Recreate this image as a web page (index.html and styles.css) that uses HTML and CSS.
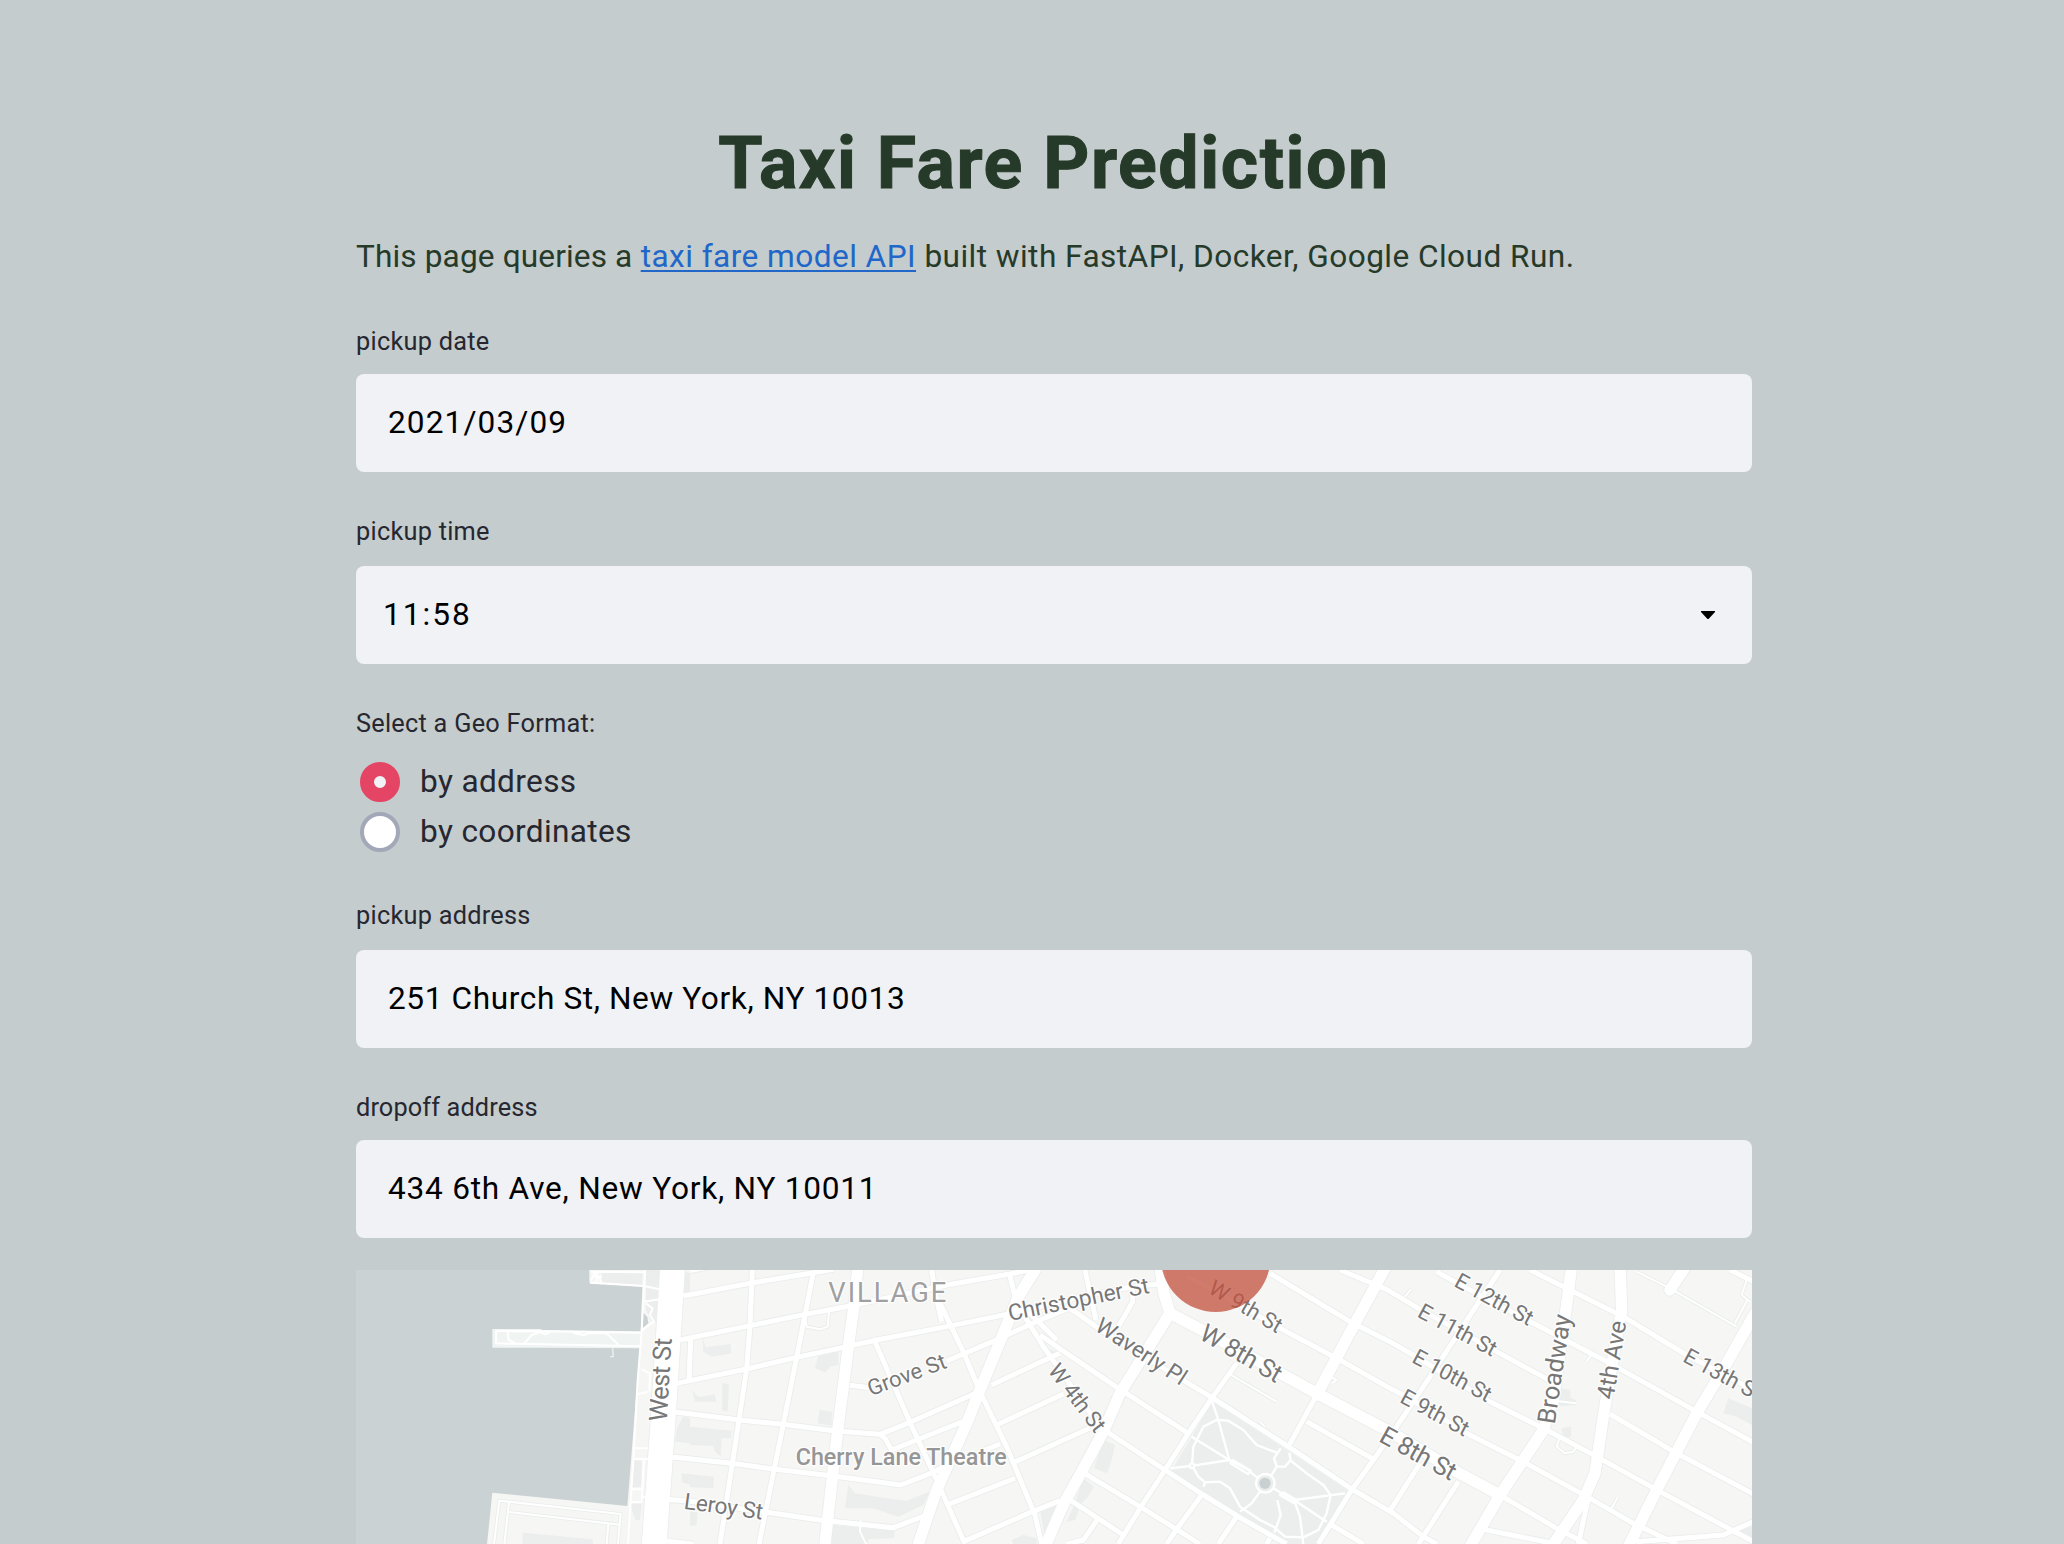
FILE: index.html
```html
<!DOCTYPE html>
<html lang="en">
<head>
<meta charset="utf-8">
<title>Taxi Fare Prediction</title>
<link rel="stylesheet" href="styles.css">
</head>
<body>
<main class="page">
  <h1 class="title">Taxi Fare Prediction</h1>
  <p class="intro"><span class="intro-lead">This page queries a</span> <a class="link" href="#">taxi fare model API</a> built with FastAPI, Docker, Google Cloud Run.</p>

  <div class="field field-date">
    <label class="label" for="date">pickup date</label>
    <input class="input input-date" id="date" type="text" value="2021/03/09">
  </div>

  <div class="field field-time">
    <span class="label">pickup time</span>
    <div class="select">
      <span class="select-value">11:58</span>
      <svg class="caret" viewBox="0 0 14 8"><path d="M0 0H14V1L8 7.4Q7 8.400 6 7.400L0 1Z"/></svg>
    </div>
  </div>

  <div class="field field-geo">
    <span class="label">Select a Geo Format:</span>
    <div class="radios">
      <div class="radio"><span class="dot dot-on"></span><span class="radio-text">by address</span></div>
      <div class="radio"><span class="dot"></span><span class="radio-text">by coordinates</span></div>
    </div>
  </div>

  <div class="field field-pickup">
    <label class="label" for="pickup">pickup address</label>
    <input class="input input-pickup" id="pickup" type="text" value="251 Church St, New York, NY 10013">
  </div>

  <div class="field field-dropoff">
    <label class="label label-dropoff" for="dropoff">dropoff address</label>
    <input class="input input-dropoff" id="dropoff" type="text" value="434 6th Ave, New York, NY 10011">
  </div>

  <svg class="map" viewBox="48 30 4188 822">
    <defs>
      <g id="minor">
        <path d="M1030 108L1240 68 1420 38 1480 28M1050 32L1100 22"/>
        <path d="M1020 240L1230 197 1395 163 1530 138 1820 75 2010 42 2080 28"/>
        <path d="M1010 370L1220 327 1370 292 1510 262 1610 240 1820 200 2000 163 2180 120 2350 85 2480 68"/>
        <path d="M1000 455L1200 480 1330 493 1480 512 1620 523 1710 487 1910 398"/>
        <path d="M1620 523L1635 535 1655 570 1730 540 1880 480"/>
        <path d="M990 590L1175 610 1300 627 1480 648 1682 675 1780 637 1850 600M1930 572L1980 552"/>
        <path d="M980 718L1050 724 1280 757 1440 780 1660 803 1760 765M1820 735L2025 655"/>
        <path d="M2015 610L2100 572 2270 495M1970 495L2170 402M1955 375L2110 302 2160 280"/>
        <path d="M1820 303L1980 235 2100 180 2200 140M1530 376L1590 383M980 843L1060 853"/>
        <path d="M1870 845L2070 758 2160 722"/>
        <path d="M1237 30L1230 195 1220 327 1197 480 1140 852"/>
        <path d="M1420 38L1395 165 1370 292 1330 493 1257 852"/>
        <path d="M1052 235L1047 362"/>
        <path d="M1605 245L1710 487 1790 660 1875 852"/>
        <path d="M1775 30L1785 95 1805 185M1800 130L1870 275 1920 395 2000 560 2085 765 2105 852"/>
        <path d="M2007 38L2030 130M2030 130L2110 260 2280 500M2060 150L2150 240"/>
        <path d="M2300 515L2475 630 2590 705 2695 770 2800 830 2840 852"/>
        <path d="M2100 225L2180 280 2340 388 2545 520"/>
        <path d="M2190 145L2290 215 2545 370 2620 415 2845 560 3040 690 3160 760 3250 830 3290 852"/>
        <path d="M2225 635L2400 740 2510 808 2580 852M2190 720L2350 825"/>
        <path d="M2690 310L2615 415 2545 520 2475 630 2400 745 2335 852"/>
        <path d="M2585 705L2510 808 2480 852M2690 770L2635 852M2790 835L2780 852"/>
        <path d="M2930 405L2845 560"/>
        <path d="M3480 30L3420 120 3270 350 3170 500 3100 600 3035 690 2935 852"/>
        <path d="M2900 485L3105 600"/>
        <path d="M2540 50L2610 85 2830 210 3000 300 3150 385 3190 405 3390 525 3555 608 3750 715 3880 790 4010 852"/>
        <path d="M2790 40L3030 185 3150 245 3220 285 3450 425 3620 510 3770 590 3960 695 4240 845"/>
        <path d="M3000 30L3140 88 3235 145 3470 275 3630 362M3810 462L4010 580 4240 702"/>
        <path d="M3290 35L3380 85 3580 190 3810 310 4070 455 4240 547"/>
        <path d="M3570 30L3690 90 3850 170 4040 285 4240 390M4170 30L4240 64"/>
        <path d="M2235 30L2268 180M2378 90L2378 125 2335 200M2275 775L2230 840 2180 852"/>
        <path d="M3745 715L3715 852M3430 808L3640 850M3480 705L3650 805 3740 852"/>
        <path d="M3890 845L4150 825 4240 785M3355 665L3235 852M3240 610L3150 752M2975 795L3070 852"/>
      </g>
      <g id="major">
        <path d="M1553 30L1543 130 1525 260 1492 520 1455 852"/>
        <path d="M2085 30L2035 110 1990 220 1920 390 1880 490 1790 690 1735 852"/>
        <path d="M2460 20L2472 100 2490 160 2340 400 2290 515 2225 635 2172 730 2115 860"/>
        <path d="M2490 160L2590 212 2830 345 2940 405 3150 515 3350 635 3480 705"/>
        <path d="M3135 25L3045 190 2930 405"/>
        <path d="M3695 20L3675 170 3640 420 3610 510 3480 705 3390 860"/>
        <path d="M3840 20L3845 150 3820 290 3790 470 3765 640 3730 720 3635 860"/>
        <path d="M4245 160L4160 310 4070 460 3950 690 3865 860M4036 20L3990 90"/>
      </g>
      <g id="thin">
        <path d="M3890 35L3990 85 4190 200M4220 60L4205 105 4230 125M4222 120L4185 190"/>
        <path d="M1395 163L1400 200 1440 208 1463 200 1467 155M1562 780L1560 815 1578 852"/>
        <path d="M2665 340L2810 425M3660 530L3650 560 3675 580 3700 575 3715 555"/>
        <path d="M3815 745L3833 712M3740 305L3752 287M2970 350L2990 360 2975 370M2760 485L2775 500"/>
        <path d="M3195 110L3213 87M3650 423L3708 430M462 852L478 722 842 762 834 852M493 852L507 728M507 756L840 794M800 852L805 792"/>
      </g>
    </defs>

    <rect class="water" x="48" y="30" width="4188" height="822"/>
    <path class="land" d="M748 30V68L907 80 900 265 862 738 457 698 441 852H4236V30Z"/>
    <path class="park" d="M785 36L908 38 906 76 785 66Z"/>
    <path class="park" d="M918 30H962L955 185 935 185 918 150Z"/>
    <path class="pier" d="M457 207H604V210L903 214 900 265 606 263H457Z"/>
    <path class="water" d="M908 155L922 172 925 190 907 205Z"/>
    <g class="park">
      <path d="M2618 425L3030 695 2935 852H2820L2490 640Z"/>
      <path d="M550 818L758 838V852H547ZM878 600L905 602 903 680 876 682ZM870 730L905 732 900 780 885 780Z"/>
      <path d="M1088 235L1097 262 1172 252 1174 280 1115 290 1090 275ZM1147 370L1167 372 1163 455 1147 450ZM1056 390L1075 412 1125 403 1128 425 1065 425Z"/>
      <path d="M1437 280L1495 275 1495 315 1470 320 1455 337 1425 325ZM1438 450L1477 455 1474 497 1433 490Z"/>
      <path d="M1050 500L1175 512 1172 535 1145 535 1142 588 1125 575 1120 558 1050 555ZM1050 643L1122 650 1120 685 1050 682ZM1050 752L1072 757 1070 795 1050 798Z"/>
      <path d="M1525 675L1545 700 1640 715 1700 722 1768 695 1750 735 1675 770 1600 745 1515 745ZM1477 795L1665 812 1662 835 1585 837 1580 852H1475Z"/>
      <path d="M2290 540L2325 555 2315 600 2302 640 2262 625ZM2230 655L2262 680 2240 715 2225 730 2205 780 2180 785 2205 730ZM2100 750L2160 730 2115 835ZM2100 260L2155 275 2120 290Z"/>
      <path d="M3660 385L3690 390 3692 415 3708 420 3705 436 3648 438 3648 405ZM3665 505L3693 500V530L3670 535ZM4165 415L4200 430 4236 445V495L4190 470 4150 460ZM4180 810L4236 800V850Z"/>
      <path d="M1033 35L1050 40V100L1032 100ZM1030 470L1050 475V550L1005 545 1012 500ZM1025 640L1050 642V675L1025 665Z"/>
      <path d="M2015 840L2050 825 2090 835V852H2020ZM2045 95L2060 95 2055 105 2045 105Z"/>
    </g>

    <use href="#thin" class="thin-edge"/>
    <use href="#minor" class="minor-edge"/>
    <use href="#major" class="major-edge"/>
    <path class="west-edge" d="M998 20L968 500 942 860"/>
    <use href="#thin" class="thin"/>
    <use href="#minor" class="minor"/>
    <use href="#major" class="major"/>
    <path class="west" d="M998 20L968 500 942 860"/>

    <g class="path">
      <path d="M468 213L620 214 903 218M468 213V250L900 259M503 215L505 238 525 250M553 250L575 225 600 216 615 223 630 216M700 218L730 225 755 218 800 220 835 254"/>
      <path d="M915 30L905 215 893 360 880 600 864 852M912 600L905 725M752 35L912 37M750 68L912 78 958 88M912 125L958 118M905 328L930 340 928 395M893 402L922 396M880 565H925M880 597H925M872 688H905M870 726H905M905 711H920"/>
      <path d="M765 36L753 62M765 36L785 66M755 50H785M770 36V65M918 130L938 145 930 165 942 185 920 200 905 212"/>
      <path class="jetty" d="M818 265L820 290H811"/>
    </g>
    <g class="walk">
      <path d="M2615 420L2635 480 2668 600 2560 617 2490 625M2555 530L2668 600 2730 632"/>
      <path d="M2556 617L2560 560 2590 500 2630 480 2665 482 2710 510 2750 555 2810 578"/>
      <path d="M2556 617L2575 650 2595 667 2640 665 2670 685 2700 740 2760 780 2800 800 2835 830 2890 832 2935 810 2960 760 2972 705 2950 675 2900 640 2850 600"/>
      <path d="M2590 680L2597 664M2678 600L2732 632 2724 642 2672 610ZM2732 637L2755 655M2800 685L2825 700 2862 720 3015 700M2830 697L2865 718 2860 728 2820 705ZM2862 720L2960 785M2862 720L2880 770 2890 852M2760 695L2735 730 2700 755M2812 720L2822 765 2803 818"/>
      <path d="M2822 565L2802 595 2810 620H2835L2852 600 2848 578M2810 620L2792 650"/>
      <circle cx="2776" cy="670" r="28"/>
      <circle class="walk-node" cx="2556" cy="617" r="7"/>
    </g>
    <circle class="pond" cx="2775" cy="670" r="17"/>

    <g class="street">
      <text font-size="76" textLength="250" transform="translate(980 485) rotate(-86.5)">West St</text>
      <text font-size="66" textLength="248" transform="translate(1592 409) rotate(-20.500)">Grove St</text>
      <text font-size="68" textLength="430" transform="translate(2009 183) rotate(-11.400)">Christopher St</text>
      <text font-size="68" textLength="238" transform="translate(1030 746) rotate(7.800)">Leroy St</text>
      <text font-size="66" textLength="238" transform="translate(2122 332) rotate(53)">W 4th St</text>
      <text font-size="68" textLength="311" transform="translate(2261 209) rotate(33)">Waverly Pl</text>
      <text font-size="66" textLength="244" transform="translate(2601 97) rotate(30.500)">W 9th St</text>
      <text font-size="76" textLength="270" transform="translate(2574 235) rotate(30)">W 8th St</text>
      <text font-size="76" textLength="250" transform="translate(3113 542) rotate(29)">E 8th St</text>
      <text font-size="66" textLength="257" transform="translate(3339 77) rotate(28.300)">E 12th St</text>
      <text font-size="66" textLength="257" transform="translate(3229 169) rotate(28.300)">E 11th St</text>
      <text font-size="66" textLength="259" transform="translate(3212 305) rotate(28.300)">E 10th St</text>
      <text font-size="66" textLength="223" transform="translate(3176 425) rotate(28.300)">E 9th St</text>
      <text font-size="66" textLength="255" transform="translate(4025 303) rotate(28.300)">E 13th St</text>
      <text font-size="76" textLength="331" transform="translate(3644 494) rotate(-81.500)">Broadway</text>
      <text font-size="72" textLength="238" transform="translate(3820 421) rotate(-80.500)">4th Ave</text>
    </g>
    <text class="district" font-size="82" x="1465" y="126" textLength="354">VILLAGE</text>
    <text class="poi" font-size="70" x="1367" y="615" textLength="633">Cherry Lane Theatre</text>
    <circle class="marker" cx="2627" cy="-8.600" r="164.600"/>
  </svg>
</main>
</body>
</html>
```
FILE: styles.css
```css
* { box-sizing: border-box; }

html, body { height: 100%; }

body {
  margin: 0;
  overflow: hidden;
  background: #c4cccd;
  color: #262730;
  font-family: Roboto, "Noto Sans", sans-serif;
}

.page {
  display: flex;
  flex-direction: column;
  width: 1396px;
  margin-left: 356px;
  padding-top: 120px;
}

.title {
  margin: 0;
  color: #263a29;
  font-size: 71.7px;
  font-weight: 700;
  line-height: 87px;
  letter-spacing: 1.55px;
  text-align: center;
  white-space: nowrap;
  -webkit-text-stroke: 1px #263a29;
}

.intro {
  margin: 24px 0 0;
  color: #263a29;
  font-size: 31.6px;
  line-height: 52px;
  letter-spacing: 0.45px;
  white-space: nowrap;
}

.intro-lead { letter-spacing: 0.13px; }

.link {
  color: #2067c9;
  text-decoration: underline;
  text-decoration-thickness: 2px;
  text-underline-offset: 3px;
  text-decoration-skip-ink: none;
}

.field {
  display: flex;
  flex-direction: column;
}

.field-date { margin-top: 40px; gap: 13px; }
.field-time { margin-top: 41px; gap: 15px; }
.field-geo { margin-top: 41px; gap: 14px; }
.field-pickup { margin-top: 40px; gap: 15px; }
.field-dropoff { margin-top: 41px; gap: 13px; }

.label {
  font-size: 25.3px;
  line-height: 38px;
  letter-spacing: 0.26px;
}

.label-dropoff { letter-spacing: 0.13px; }

.input, .select {
  width: 100%;
  height: 98px;
  border: 0;
  border-radius: 8px;
  background: #f0f2f6;
  color: #000;
  font: 31.6px Roboto, "Noto Sans", sans-serif;
}

.input { padding: 0 32px 1px; }
.input-date { letter-spacing: 1.1px; }
.input-pickup { letter-spacing: 0.61px; }
.input-dropoff { letter-spacing: 0.77px; }

.select {
  display: flex;
  align-items: center;
  justify-content: space-between;
  padding: 0 37px 0 27px;
}

.select-value { padding-bottom: 1px; letter-spacing: 2.02px; }

.caret {
  width: 14px;
  height: 8px;
  fill: #000;
}

.radio {
  display: flex;
  align-items: center;
  gap: 20px;
  height: 50px;
  padding-left: 4px;
}

.radio-text {
  padding-bottom: 2px;
  font-size: 31.6px;
  letter-spacing: 0.35px;
}

.dot {
  width: 40px;
  height: 40px;
  border: 4px solid #a3a8b8;
  border-radius: 50%;
  background: #fff;
}

.dot-on {
  border: 14px solid #e44565;
  background: #f0f2f6;
}

.map {
  display: block;
  width: 1396px;
  height: 274px;
  margin-top: 32px;
}

.water { fill: #cad2d3; }
.land { fill: #f6f6f4; }
.park { fill: #ebeeed; }
.pier { fill: #f0f4f3; }

.minor, .minor-edge, .major, .major-edge, .thin, .thin-edge,
.west, .west-edge, .path, .walk {
  fill: none;
  stroke: #fff;
  stroke-linejoin: round;
}

.minor-edge { stroke: #e9edec; stroke-width: 20px; }
.minor { stroke-width: 15px; }
.major-edge { stroke: #e9edec; stroke-width: 39px; stroke-linecap: round; }
.major { stroke-width: 34px; stroke-linecap: round; }
.thin-edge { stroke: #e9edec; stroke-width: 11px; }
.thin { stroke-width: 6px; }
.west-edge { stroke: #e9edec; stroke-width: 79px; }
.west { stroke-width: 74px; }
.path { stroke-width: 6px; }
.jetty { stroke: #eef1f1; stroke-width: 4px; }
.walk { stroke-width: 7px; }
.walk-node { fill: #ebeeed; }
.pond { fill: #c8d0d2; }

.street, .district, .poi {
  paint-order: stroke;
  stroke: rgba(255, 255, 255, 0.9);
  stroke-width: 8px;
  stroke-linejoin: round;
}

.street { fill: #777; }
.district { fill: #a0a0a0; }
.poi { fill: #969696; font-weight: 500; }
.marker { fill: rgba(195, 82, 63, 0.76); }
```
